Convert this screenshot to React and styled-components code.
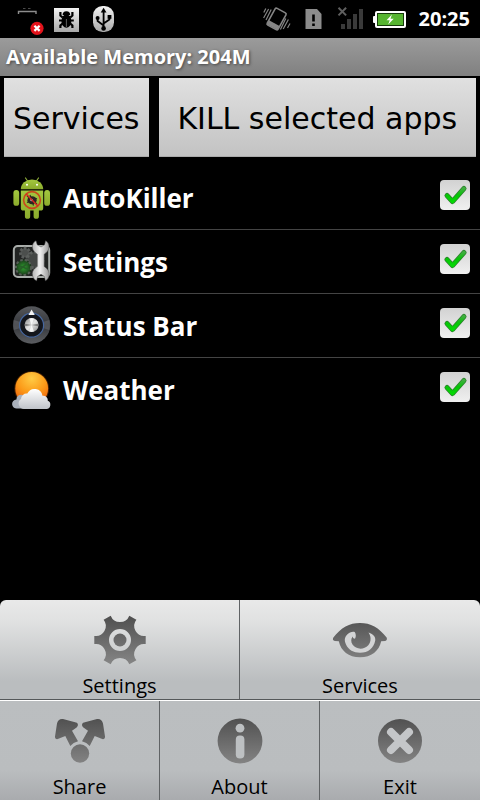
import React, { useState } from 'react';
import styled, { createGlobalStyle } from 'styled-components';

const apps = [
  { id: 'autokiller', name: 'AutoKiller', Icon: RobotIcon },
  { id: 'settings', name: 'Settings', Icon: ToolsIcon },
  { id: 'statusbar', name: 'Status Bar', Icon: KnobIcon },
  { id: 'weather', name: 'Weather', Icon: WeatherIcon },
];

function App() {
  const [selected, setSelected] = useState(apps.map((app) => app.id));

  const toggle = (id) => {
    setSelected(
      selected.includes(id)
        ? selected.filter((item) => item !== id)
        : [...selected, id]
    );
  };

  return (
    <Screen>
      <GlobalStyle />
      <IconDefs />

      <StatusBar>
        <AlertIcon />
        <DebugIcon />
        <UsbIcon />
        <Spacer />
        <VibrateIcon />
        <SimIcon />
        <SignalIcon />
        <BatteryIcon />
        <Clock>20:25</Clock>
      </StatusBar>

      <TitleBar>Available Memory: 204M</TitleBar>

      <Actions>
        <ActionButton type='button'>Services</ActionButton>
        <ActionButton type='button' $grow>
          KILL selected apps
        </ActionButton>
      </Actions>

      <AppList>
        {apps.map(({ id, name, Icon }) => (
          <AppRow key={id}>
            <AppLabel htmlFor={id}>
              <Icon />
              <AppName>{name}</AppName>
            </AppLabel>
            <CheckWrap>
              <Checkbox
                id={id}
                type='checkbox'
                checked={selected.includes(id)}
                onChange={() => toggle(id)}
              />
              {selected.includes(id) && <CheckMark />}
            </CheckWrap>
          </AppRow>
        ))}
      </AppList>

      <Menu>
        <MenuRow $top>
          <MenuButton type='button'>
            <GearIcon />
            <MenuLabel>Settings</MenuLabel>
          </MenuButton>
          <MenuButton type='button'>
            <EyeIcon />
            <MenuLabel>Services</MenuLabel>
          </MenuButton>
        </MenuRow>
        <MenuRow>
          <MenuButton type='button'>
            <ShareIcon />
            <MenuLabel>Share</MenuLabel>
          </MenuButton>
          <MenuButton type='button'>
            <InfoIcon />
            <MenuLabel>About</MenuLabel>
          </MenuButton>
          <MenuButton type='button'>
            <ExitIcon />
            <MenuLabel>Exit</MenuLabel>
          </MenuButton>
        </MenuRow>
      </Menu>
    </Screen>
  );
}

export default App;

// gradients shared by the icons
function IconDefs() {
  return (
    <HiddenSvg width='0' height='0' aria-hidden='true'>
      <defs>
        <linearGradient
          id='menuInk'
          gradientUnits='userSpaceOnUse'
          x1='0'
          y1='4'
          x2='0'
          y2='52'>
          <stop offset='0' stopColor='#4f4f4f' />
          <stop offset='1' stopColor='#858585' />
        </linearGradient>
        <linearGradient id='silver' x1='0' y1='0' x2='0' y2='1'>
          <stop offset='0' stopColor='#f4f4f4' />
          <stop offset='1' stopColor='#a8a8a8' />
        </linearGradient>
        <linearGradient id='steel' x1='0' y1='0' x2='1' y2='0'>
          <stop offset='0' stopColor='#b5b5b5' />
          <stop offset='0.45' stopColor='#efefef' />
          <stop offset='1' stopColor='#969696' />
        </linearGradient>
        <linearGradient id='robot' x1='0' y1='0' x2='0' y2='1'>
          <stop offset='0' stopColor='#a3c83f' />
          <stop offset='1' stopColor='#8bab2c' />
        </linearGradient>
        <radialGradient id='greenGlow'>
          <stop offset='0' stopColor='#2fa52f' />
          <stop offset='1' stopColor='#1a331a' />
        </radialGradient>
        <linearGradient id='knobRim' x1='0' y1='0' x2='0' y2='1'>
          <stop offset='0' stopColor='#55575b' />
          <stop offset='0.5' stopColor='#34363a' />
          <stop offset='1' stopColor='#5b5d61' />
        </linearGradient>
        <linearGradient id='knobCap' x1='0' y1='0' x2='1' y2='1'>
          <stop offset='0' stopColor='#8a8a8a' />
          <stop offset='0.5' stopColor='#e6e6e6' />
          <stop offset='1' stopColor='#8a8a8a' />
        </linearGradient>
        <radialGradient id='sun' cx='0.5' cy='0.2' r='0.8'>
          <stop offset='0' stopColor='#ffcb45' />
          <stop offset='0.55' stopColor='#fb9a18' />
          <stop offset='1' stopColor='#ee5f0c' />
        </radialGradient>
        <linearGradient id='cloud' x1='0' y1='0' x2='0' y2='1'>
          <stop offset='0' stopColor='#ffffff' />
          <stop offset='1' stopColor='#bfc3c9' />
        </linearGradient>
        <linearGradient id='check' x1='0' y1='0' x2='0' y2='1'>
          <stop offset='0' stopColor='#3fae3f' />
          <stop offset='0.5' stopColor='#06c406' />
          <stop offset='1' stopColor='#05d905' />
        </linearGradient>
      </defs>
    </HiddenSvg>
  );
}

function AlertIcon() {
  return (
    <StatusSvg width='28' height='32' viewBox='0 0 28 32' aria-hidden='true'>
      <path d='M2.5 11V8.5H20V11' stroke='#8d8d8d' strokeWidth='1.4' fill='none' />
      <path d='M7 5.5h2.5M12 5.5h2.5' stroke='#4a4a4a' strokeWidth='1.2' />
      <circle cx='21' cy='25.3' r='6.6' fill='#e3131b' />
      <path
        d='M18.4 22.7l5.2 5.2M23.6 22.7l-5.2 5.2'
        stroke='#fff'
        strokeWidth='2.2'
      />
    </StatusSvg>
  );
}

function DebugIcon() {
  return (
    <StatusSvg width='26' height='32' viewBox='0 0 26 32' aria-hidden='true'>
      <rect x='0' y='5' width='25' height='24' fill='url(#silver)' />
      <ellipse cx='12.4' cy='18' rx='5' ry='6.8' />
      <path d='M8.6 12a3.8 3.8 0 0 1 7.6 0z' />
      <path
        d='M8.6 14.5L6.4 12.500V9M16.2 14.500l2.200-2V9M8.500 17.500H5M16.300 17.500h3.500M8.600 20.500l-2.200 2v2.500M16.200 20.500l2.200 2v2.500'
        stroke='#000'
        strokeWidth='2.2'
        fill='none'
      />
      <path d='M12.4 16v8' stroke='#777' strokeWidth='0.8' />
    </StatusSvg>
  );
}

function UsbIcon() {
  return (
    <StatusSvg width='28' height='32' viewBox='0 0 28 32' aria-hidden='true'>
      <rect x='3' y='3' width='21' height='26' rx='9.5' fill='url(#silver)' />
      <path
        d='M13.6 8v17M13.6 22.5L7.6 18v-3M13.6 20.5l5.8-4v-3'
        stroke='#000'
        strokeWidth='1.8'
        fill='none'
      />
      <path d='M13.6 4.8l2.9 4.8h-5.8z' />
      <circle cx='13.6' cy='25.4' r='2.3' />
      <circle cx='7.6' cy='15' r='2' />
      <rect x='17.6' y='12' width='3.8' height='3.8' />
    </StatusSvg>
  );
}

function VibrateIcon() {
  return (
    <StatusSvg width='28' height='32' viewBox='0 0 28 32' aria-hidden='true'>
      <g transform='rotate(29 13.6 16)' fill='none' stroke='#858585'>
        <rect x='7.4' y='6.4' width='12.4' height='19.2' rx='1.5' strokeWidth='1.6' />
        <path d='M7.6 23h12' strokeWidth='4.4' />
      </g>
      <path
        d='M5.6 6L0.6 15M8.200 6.500L3 17M22.800 15.500l-5.400 11M25.400 16.500l-5.200 9.500M2.800 5.500L0.800 9.500M27 20.500l-2.500 4.500'
        stroke='#858585'
        strokeWidth='1.2'
      />
    </StatusSvg>
  );
}

function SimIcon() {
  return (
    <StatusSvg width='26' height='32' viewBox='0 0 26 32' aria-hidden='true'>
      <path d='M4.500 6h11.500l4.500 5v15h-16z' fill='#8c8c8c' />
      <path d='M11.200 11.500h2.600v7h-2.600zM11.200 20.400h2.600V23h-2.600z' />
    </StatusSvg>
  );
}

function SignalIcon() {
  return (
    <StatusSvg width='26' height='32' viewBox='0 0 26 32' aria-hidden='true'>
      <path
        d='M4 21h4v5H4zM10 16h4v10h-4zM16 11h4v15h-4zM22 6h4v20h-4z'
        fill='#3a3a3a'
      />
      <path d='M1.5 4.800l7.600 7.600M9.100 4.800l-7.600 7.600' stroke='#5f5f5f' strokeWidth='2' />
    </StatusSvg>
  );
}

function BatteryIcon() {
  return (
    <StatusSvg width='36' height='32' viewBox='0 0 36 32' aria-hidden='true'>
      <rect x='0' y='13' width='4' height='7' rx='1' fill='#fff' />
      <rect x='2' y='8' width='31' height='17' rx='2' fill='#fff' />
      <rect x='4' y='10' width='27' height='13' fill='#173c0c' />
      <rect x='5' y='11' width='25' height='11' fill='#57b531' />
      <path d='M19 11.600l-5.500 5.600h3.200l-1.500 4.400 5.500-5.800h-3.200z' fill='#fff' />
    </StatusSvg>
  );
}

function RobotIcon() {
  return (
    <AppSvg viewBox='0 0 40 44' aria-hidden='true'>
      <path
        d='M14.5 2l2.8 4M27.5 2l-2.8 4'
        stroke='#8fae3a'
        strokeWidth='1.2'
        strokeLinecap='round'
      />
      <path d='M9.8 13.2a11.2 9.8 0 0 1 22.4 0z' fill='url(#robot)' />
      <circle cx='16' cy='8.8' r='1' fill='#fff' />
      <circle cx='26' cy='8.8' r='1' fill='#fff' />
      <rect x='2.4' y='14' width='5.8' height='15.8' rx='2.9' fill='url(#robot)' />
      <rect x='33.2' y='14' width='5.8' height='15.8' rx='2.9' fill='url(#robot)' />
      <path
        d='M9.8 14.4h22.4V32a2.6 2.6 0 0 1-2.6 2.6h-1.7v5.6a2.6 2.6 0 0 1-5.3 0v-5.6h-3.4v5.6a2.6 2.6 0 0 1-5.3 0v-5.6h-1.5A2.6 2.6 0 0 1 9.8 32z'
        fill='url(#robot)'
      />
      <ellipse cx='21' cy='24.2' rx='4.6' ry='4' fill='#2b2422' />
      <path
        d='M16 20l10 8M16 26.5l10-4M19 19l3.5 10.5'
        stroke='#2b2422'
        strokeWidth='1.1'
      />
      <circle cx='20.5' cy='24' r='1.3' fill='#b9a6b6' />
      <circle cx='21' cy='24' r='8.4' fill='none' stroke='#c9481c' strokeWidth='1.6' />
      <path d='M15.2 18l11.6 12' stroke='#d42a20' strokeWidth='1.5' />
    </AppSvg>
  );
}

function ToolsIcon() {
  return (
    <AppSvg viewBox='0 0 40 44' aria-hidden='true'>
      <rect
        x='2.8'
        y='6'
        width='35.4'
        height='31'
        rx='4'
        fill='#222423'
        stroke='#a9adaa'
        strokeWidth='2'
      />
      <circle
        cx='14'
        cy='12.8'
        r='4.6'
        fill='#4c4f4d'
        stroke='#5a5d5b'
        strokeWidth='3'
        strokeDasharray='2.4 1.6'
      />
      <circle
        cx='24'
        cy='20'
        r='8'
        fill='#444745'
        stroke='#5c605d'
        strokeWidth='3'
        strokeDasharray='2.6 2'
      />
      <circle cx='12.5' cy='27.5' r='8' fill='url(#greenGlow)' />
      <circle
        cx='12.5'
        cy='27.5'
        r='7.6'
        fill='none'
        stroke='#565e56'
        strokeWidth='2'
        strokeDasharray='2.6 2'
      />
      <path d='M8 30l9-7M6.5 25.5l12 4' stroke='#276027' strokeWidth='1.6' />
      <path
        d='M25 0.8C22.5 2 21.2 4.4 21.4 7.4c0.3 3 2.4 4.800 4.900 6.800v12.300c-2.800 1.800-4.800 4-5 7-0.100 3.500 1.700 6.100 4.300 7.300l1-4.300 3.400-2.300 3.400 2.300 1 4.300c2.400-1.200 4-3.800 3.800-7.300-0.200-3-2.400-5.200-5-7V14.200c2.600-2 4.600-3.800 4.800-6.800 0.200-3-1-5.400-3.400-6.600l-1 4L30 7l-3.800-2.200z'
        fill='url(#steel)'
        stroke='#4c4c4c'
        strokeWidth='0.5'
      />
    </AppSvg>
  );
}

function KnobIcon() {
  return (
    <AppSvg viewBox='0 0 40 44' aria-hidden='true'>
      <circle cx='20.6' cy='21' r='18.7' fill='url(#knobRim)' />
      <path
        d='M2.5 18a18.5 18.5 0 0 1 0.4-2l8 2.5v5l-8 2.5a18.5 18.5 0 0 1-0.4-8zM38.7 18a18.5 18.5 0 0 0-0.4-2l-8 2.5v5l8 2.5a18.5 18.5 0 0 0 0.4-8z'
        fill='#6c6e73'
        opacity='0.5'
      />
      <circle
        cx='20.6'
        cy='21.2'
        r='12'
        fill='#14161c'
        stroke='#46679f'
        strokeWidth='1.2'
      />
      <path d='M20.6 5.6l3.200 5.400h-6.400z' fill='#f2f2f2' />
      <circle cx='20.6' cy='21' r='7' fill='url(#knobCap)' />
      <path
        d='M20.6 21l-2.400-6.600a7 7 0 0 1 4.800 0zM20.600 21l-2.400 6.600a7 7 0 0 0 4.800 0z'
        fill='#fff'
        opacity='0.8'
      />
      <path
        d='M20.6 21l-6.500-1.300v2.600zM20.600 21l6.500-1.300v2.600z'
        fill='#333'
        opacity='0.5'
      />
    </AppSvg>
  );
}

function WeatherIcon() {
  return (
    <AppSvg viewBox='0 0 40 44' aria-hidden='true'>
      <circle cx='20.7' cy='20.6' r='17.4' fill='#8a3f05' opacity='0.5' />
      <circle cx='20.7' cy='20.4' r='16.4' fill='url(#sun)' />
      <path
        d='M6 40.6a4.6 4.6 0 0 1-0.6-9.2 5 5 0 0 1 5-4.6 6 6 0 0 1 4 1.6L16 40.6z'
        fill='#a9b0ba'
      />
      <path
        d='M13.5 41a5.5 5.5 0 0 1-3.5-10 5.6 5.6 0 0 1 6.3-5.4 8 8 0 0 1 15.2 2.2 4.5 4.5 0 0 1 5.3 5 4.3 4.3 0 0 1-1.3 8.2z'
        fill='url(#cloud)'
      />
    </AppSvg>
  );
}

function CheckMark() {
  return (
    <CheckSvg viewBox='0 0 30 30' aria-hidden='true'>
      <path
        d='M7 15.5l5.5 6L24 8.5'
        fill='none'
        stroke='#2c7d2c'
        strokeWidth='5'
        strokeLinecap='round'
        strokeLinejoin='round'
      />
      <path
        d='M7 15.5l5.5 6L24 8.5'
        fill='none'
        stroke='url(#check)'
        strokeWidth='3.6'
        strokeLinecap='round'
        strokeLinejoin='round'
      />
    </CheckSvg>
  );
}

function GearIcon() {
  return (
    <MenuSvg viewBox='0 0 56 56' aria-hidden='true'>
      <path
        fill='url(#menuInk)'
        fillRule='evenodd'
        d='M53.7 23.9v8.2A10 10 0 0 0 44.4 48.2L37.3 52.3A10 10 0 0 0 18.7 52.3L11.6 48.2A10 10 0 0 0 2.3 32.1V23.9A10 10 0 0 0 11.6 7.8L18.7 3.7A10 10 0 0 0 37.3 3.7L44.4 7.8A10 10 0 0 0 53.7 23.9zM28 17a11 11 0 1 0 0 22 11 11 0 0 0 0-22z'
      />
      <circle cx='28' cy='28' r='6.5' fill='url(#menuInk)' />
    </MenuSvg>
  );
}

function EyeIcon() {
  return (
    <MenuSvg viewBox='0 0 56 56' aria-hidden='true'>
      <path
        fill='url(#menuInk)'
        d='M1.2 25.8C9 15.500 17.500 11 28 11S47 15.500 54.800 25.800c0.400 1.600-0.200 3-1.600 3.200l-4 0.200C47 39 39.500 45.200 28 45.200S9 39 6.800 29.200L2.800 29c-1.600-0.200-2.400-1.600-1.600-3.200z'
      />
      <path
        fill='#d3d4d5'
        d='M18 20.500C12 24 12 28 14 32.500 16.500 38 21.500 40.700 28 40.700c8.500 0 13.500-4.600 15.200-12 0.700-3.500-1.500-6.500-6.700-8.200 2.600 3.500 3 9-0.200 12.800-4.600 5-12.400 4.300-15.800-0.700-1.800-2.800-1.600-6 0.200-8.200 0.200 1.400 0.900 2.200 2.300 2.300 1.300-2.200 1-4.800-0.300-6.700-1.300-0.400-2.900-0.300-4.700 0.500z'
      />
    </MenuSvg>
  );
}

function ShareIcon() {
  const arrow =
    'M11 6L24 9.600c2.400 0.700 2.600 3.400 0.600 4.800L20 17.700l6 10.500a13 13 0 0 0-7.700 4.700L13.300 23l-6.900 2.800c-2 1-3.500-0.200-3.400-2.400L5 10.500C5.600 7.500 8 5.400 11 6z';
  return (
    <MenuSvg viewBox='0 0 56 56' aria-hidden='true'>
      <g fill='url(#menuInk)'>
        <path d={arrow} />
        <path d={arrow} transform='translate(56 0) scale(-1 1)' />
        <circle cx='28' cy='40.5' r='9.2' />
      </g>
    </MenuSvg>
  );
}

function InfoIcon() {
  return (
    <MenuSvg viewBox='0 0 56 56' aria-hidden='true'>
      <circle cx='28' cy='28' r='22.4' fill='url(#menuInk)' />
      <circle cx='28' cy='15.2' r='4.4' fill='#bdc0c2' />
      <rect x='23.8' y='22.5' width='8.6' height='23' rx='4' fill='#bdc0c2' />
    </MenuSvg>
  );
}

function ExitIcon() {
  return (
    <MenuSvg viewBox='0 0 56 56' aria-hidden='true'>
      <circle cx='28' cy='28' r='22' fill='url(#menuInk)' />
      <path
        d='M19 19l18 18M37 19L19 37'
        stroke='#c4c6c8'
        strokeWidth='8'
        strokeLinecap='round'
      />
    </MenuSvg>
  );
}

const GlobalStyle = createGlobalStyle`
  * {
    box-sizing: border-box;
  }
  body {
    margin: 0;
    background-color: #000;
    font-family: 'Open Sans', 'Noto Sans', sans-serif;
  }
`;

const Screen = styled.div`
  display: flex;
  flex-direction: column;
  min-height: 100vh;
  background-color: #000;
`;

const HiddenSvg = styled.svg`
  position: absolute;
`;

const StatusBar = styled.header`
  display: flex;
  align-items: center;
  gap: 10px;
  height: 38px;
  padding: 0 10px 0 16px;
`;

const StatusSvg = styled.svg`
  flex: none;
`;

const Spacer = styled.div`
  flex: 1;
`;

const Clock = styled.time`
  color: #fff;
  font-size: 20px;
  font-weight: 700;
  line-height: 24px;
`;

const TitleBar = styled.h1`
  margin: 0;
  padding: 0 6px;
  background: linear-gradient(#9b9b9b, #808080);
  color: #fff;
  font-size: 20px;
  font-weight: 700;
  line-height: 38px;
  text-shadow: 1px 1px 3px #444;
`;

const Actions = styled.div`
  display: flex;
  gap: 10px;
  padding: 2px 4px 9px;
`;

const ActionButton = styled.button`
  flex: ${(props) => (props.$grow ? '1' : 'none')};
  padding: 23px 9px 19px;
  border: none;
  border-bottom: 1px solid #aaa;
  background: linear-gradient(#e0e0e0, #c3c3c3);
  color: #000;
  font-family: 'DejaVu Sans', sans-serif;
  font-size: 30px;
  line-height: 36px;
`;

const AppList = styled.ul`
  flex: 1;
  margin: 0;
  padding: 0;
  list-style: none;
`;

const AppRow = styled.li`
  display: flex;
  align-items: center;
  height: 64px;
  padding: 0 10px 0 11px;
  border-bottom: 1px solid #444;
  &:last-child {
    border-bottom-color: transparent;
  }
`;

const AppLabel = styled.label`
  flex: 1;
  display: flex;
  align-items: center;
  gap: 12px;
`;

const AppSvg = styled.svg`
  flex: none;
  width: 40px;
  height: 44px;
`;

const AppName = styled.span`
  color: #fff;
  font-size: 26px;
  font-weight: 700;
  line-height: 36px;
`;

const CheckWrap = styled.span`
  position: relative;
  width: 30px;
  height: 30px;
  margin-bottom: 6px;
`;

const Checkbox = styled.input`
  appearance: none;
  display: block;
  width: 30px;
  height: 30px;
  margin: 0;
  border-radius: 4px;
  background: linear-gradient(#d2d2d2, #f0f0f0);
`;

const CheckSvg = styled.svg`
  position: absolute;
  inset: 0;
  pointer-events: none;
`;

const Menu = styled.nav`
  overflow: hidden;
  border-radius: 6px 6px 0 0;
`;

const MenuRow = styled.div`
  display: grid;
  grid-auto-flow: column;
  grid-auto-columns: 1fr;
  background: ${(props) =>
    props.$top
      ? 'linear-gradient(#e9e9e9, #e0e1e1 22%, #babdbf 82%, #babdbf)'
      : 'linear-gradient(#bbbec0, #babdbf 70%, #a9abae)'};
  border-bottom: ${(props) => (props.$top ? '1px solid #55585a' : 'none')};
  border-top: ${(props) => (props.$top ? 'none' : '1px solid #fff')};
`;

const MenuButton = styled.button`
  display: flex;
  flex-direction: column;
  align-items: center;
  gap: 6px;
  padding: 12px 0 1px;
  border: none;
  border-right: 1px solid #606365;
  background: none;
  color: #000;
  font-family: inherit;
  &:last-child {
    border-right: none;
  }
`;

const MenuSvg = styled.svg`
  width: 56px;
  height: 56px;
`;

const MenuLabel = styled.span`
  font-size: 20px;
  line-height: 24px;
`;
